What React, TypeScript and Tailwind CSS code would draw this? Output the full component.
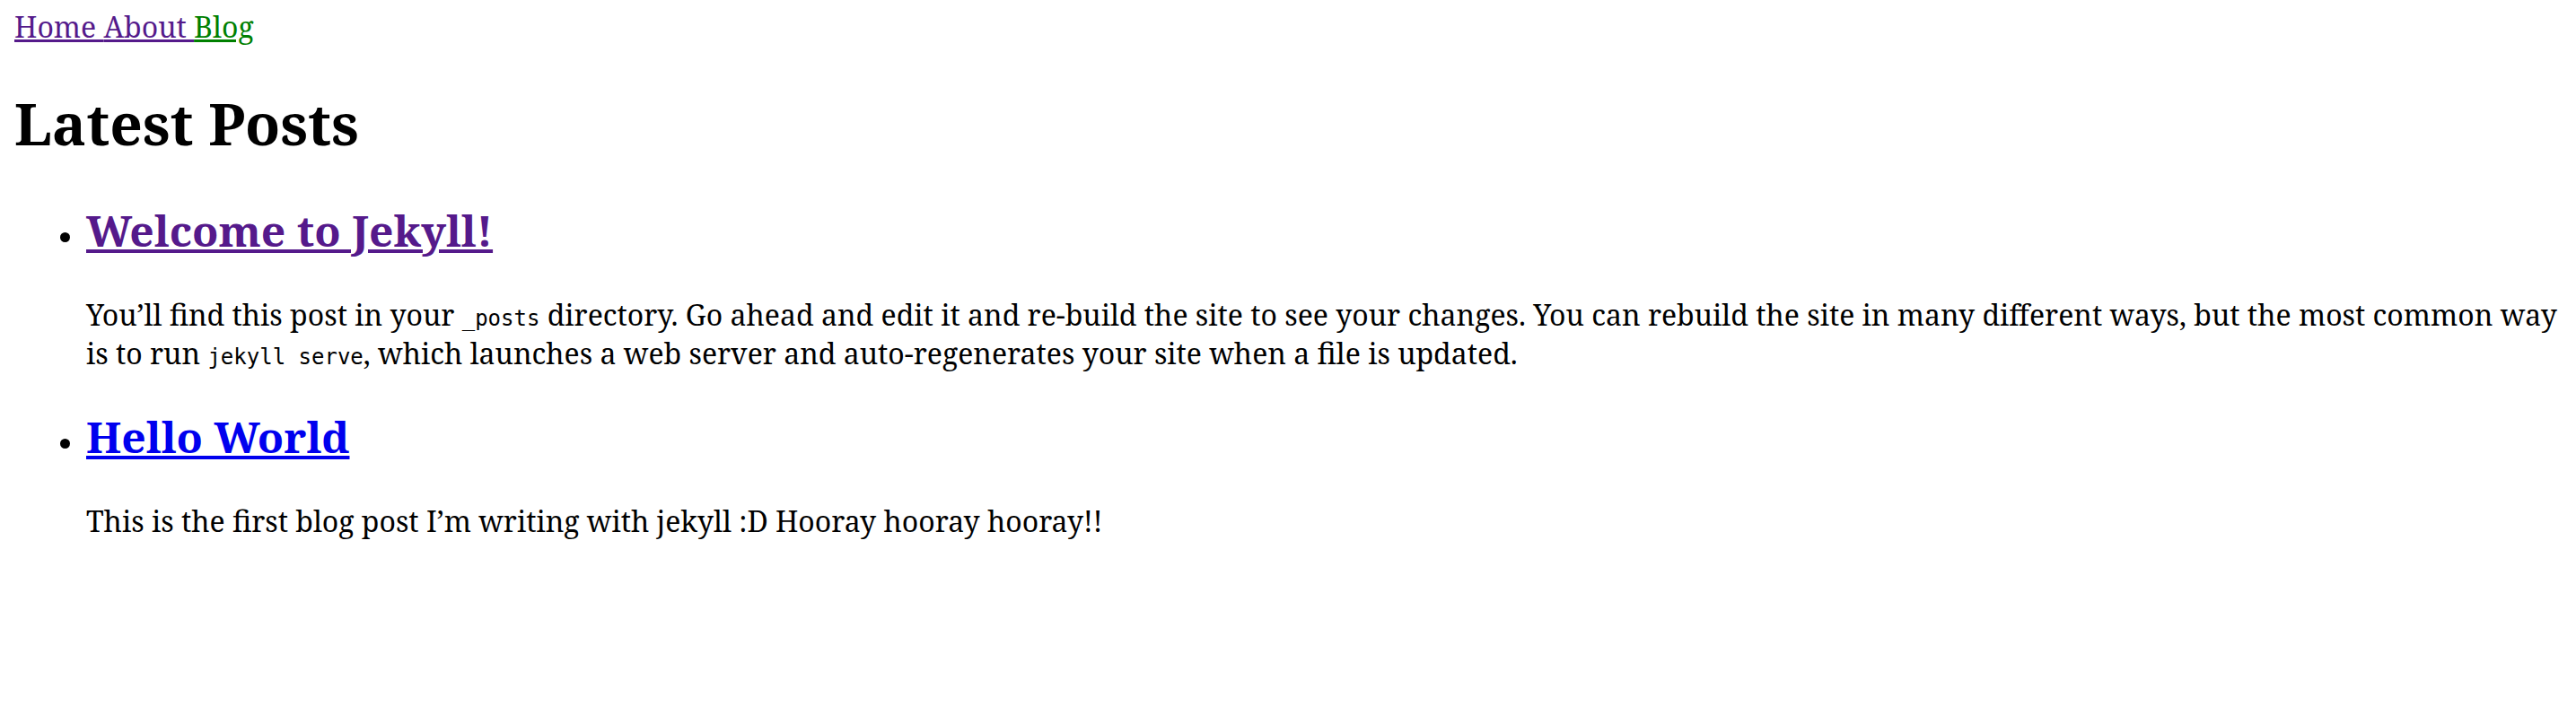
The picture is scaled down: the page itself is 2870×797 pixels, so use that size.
import React from 'react';

const code = "font-['DejaVu_Sans_Mono','Liberation_Mono',monospace] text-[24px]";

const posts = [
  {
    title: 'Welcome to Jekyll!',
    visited: true,
    body: (
      <>
        You’ll find this post in your <code className={code}>_posts</code> directory. Go ahead and edit it and re-build the site to see your changes. You can rebuild the site in many different ways, but the most common way is to run{' '}
        <code className={code}>jekyll serve</code>, which launches a web server and auto-regenerates your site when a file is updated.
      </>
    ),
  },
  {
    title: 'Hello World',
    visited: false,
    body: <>This is the first blog post I’m writing with jekyll :D Hooray hooray hooray!!</>,
  },
];

const App = () => {
  return (
    <div className="min-h-screen bg-white px-4 pt-2 font-['Noto_Serif','DejaVu_Serif',serif] text-[32px] leading-[normal] text-black">
      <nav>
        <a href="#" className="text-[#551a8b] underline">Home </a>
        <a href="#" className="text-[#551a8b] underline">About </a>
        <a href="#" className="text-[#008000] underline">Blog</a>
      </nav>

      <h1 className="my-[42.88px] text-[64px] font-bold leading-[normal]">Latest Posts</h1>

      <ul className="my-8 list-disc pl-20">
        {posts.map((p) => (
          <li key={p.title}>
            <h2 className="my-[39.84px] text-[48px] font-bold leading-[normal]">
              <a href="#" className={p.visited ? 'text-[#551a8b] underline' : 'text-[#0000ee] underline'}>
                {p.title}
              </a>
            </h2>
            <p className="my-8">{p.body}</p>
          </li>
        ))}
      </ul>
    </div>
  );
};

export default App;
